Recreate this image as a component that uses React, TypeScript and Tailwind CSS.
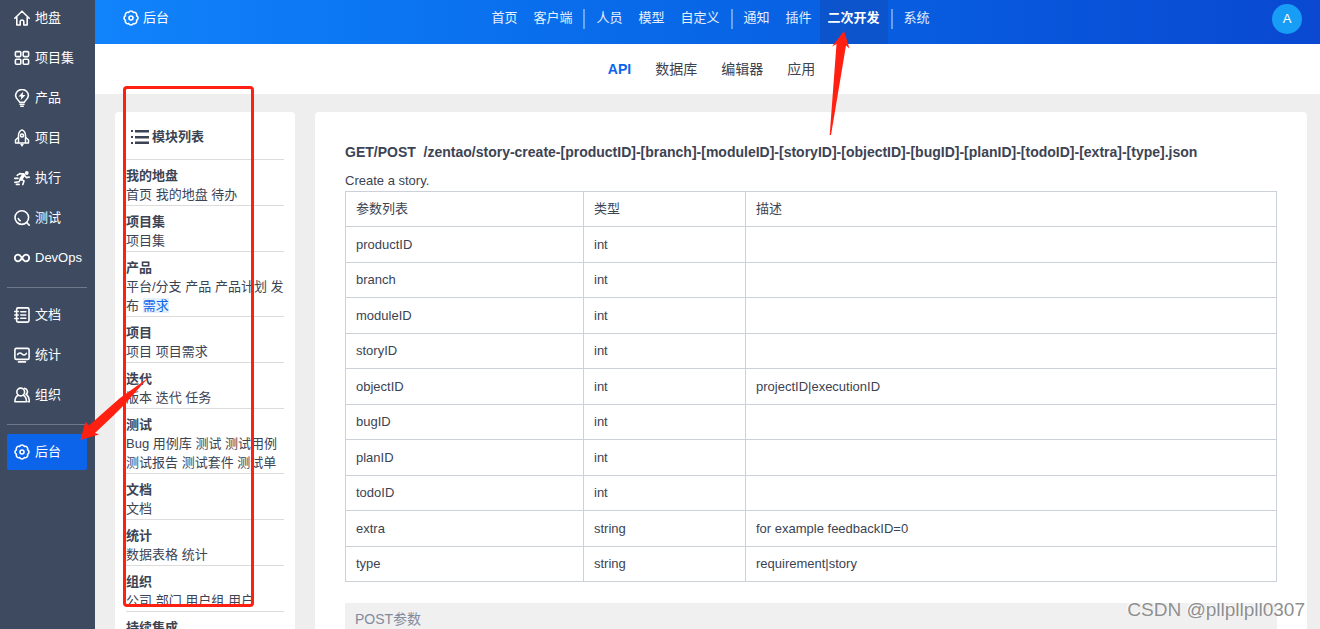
/**
 * Admin > secondary development > API page: module list on the left,
 * the selected endpoint with its parameters on the right.
 */
import { Fragment, type ReactNode } from 'react';

interface NavItem {
  label: string;
  icon: ReactNode;
  active?: boolean;
}

interface Module {
  title: string;
  entries: string[];
}

interface Param {
  name: string;
  type: string;
  desc?: string;
}

function Icon({ children }: { children: ReactNode }) {
  return (
    <svg
      viewBox="0 0 16 16"
      className="size-4 shrink-0"
      fill="none"
      stroke="currentColor"
      strokeWidth="1.6"
      strokeLinecap="round"
      strokeLinejoin="round"
      aria-hidden="true"
    >
      {children}
    </svg>
  );
}

const gear = (
  <Icon>
    <path d="M13.6 5.7A2.6 2.6 0 0 1 13.6 10.3A2.6 2.6 0 0 1 10.3 13.6A2.6 2.6 0 0 1 5.7 13.6A2.6 2.6 0 0 1 2.4 10.3A2.6 2.6 0 0 1 2.4 5.7A2.6 2.6 0 0 1 5.7 2.4A2.6 2.6 0 0 1 10.3 2.4A2.6 2.6 0 0 1 13.6 5.7Z" />
    <circle cx="8" cy="8" r="2" />
  </Icon>
);

const groups: NavItem[][] = [
  [
    { label: '地盘', icon: <Icon><path d="M.8 8.3 8 1.2l7.2 7.1M2.8 7v8h3.4v-3.2a1.8 1.8 0 0 1 3.6 0V15h3.4V7" /></Icon> },
    {
      label: '项目集',
      icon: (
        <Icon>
          <rect x="1.4" y="1.6" width="5.4" height="5" rx="1" />
          <rect x="9.2" y="1.6" width="5.4" height="5" rx="1" />
          <rect x="1.4" y="9.2" width="5.4" height="5" rx="1" />
          <rect x="9.2" y="9.2" width="5.4" height="5" rx="1" />
        </Icon>
      ),
    },
    {
      label: '产品',
      icon: (
        <svg viewBox="0 0 16 18" className="h-[18px] w-4 shrink-0" fill="none" stroke="currentColor" strokeWidth="1.6" aria-hidden="true">
          <path d="M5.6 13.2c0-1.6-4-3-4-6.6a6.4 6.1 0 0 1 12.8 0c0 3.6-4 5-4 6.6z" strokeLinejoin="round" />
          <path d="M5.4 15.2h5.2M6.2 17.2h3.6" />
          <path d="M9.2 2.8 4.5 7.6h2.8l-.6 3.5 4.8-5H8.7z" fill="currentColor" stroke="none" />
        </svg>
      ),
    },
    {
      label: '项目',
      icon: (
        <svg viewBox="0 0 16 18" className="h-[18px] w-4 shrink-0" fill="none" stroke="currentColor" strokeWidth="1.5" strokeLinejoin="round" aria-hidden="true">
          <path d="M4.5 14V6.5C4.5 3.6 6.4 1.6 8 .9c1.6.7 3.5 2.7 3.5 5.6V14z" />
          <path d="M4.5 8.3 1.5 11v3h3M11.5 8.3l3 2.7v3h-3" />
          <circle cx="8" cy="6.6" r="1.5" />
          <path d="M6 14.8h4L8 18z" fill="currentColor" stroke="none" />
        </svg>
      ),
    },
    {
      label: '执行',
      icon: (
        <Icon>
          <circle cx="12.8" cy="3" r="1.9" fill="currentColor" stroke="none" />
          <path d="M9.7 4.9 7 8.9" strokeWidth="3.4" />
          <path d="M9.5 4.1 5.8 3.6 3.2 5.3M10.8 5.7l1.6 1.9 2.8-.5M7.2 9.2l2.8 1.7-1.2 3.7M6.4 9.4l-1.5 2.4-4 .6M.8 8.4h3.2M2.4 14.4h2.8" />
        </Icon>
      ),
    },
    { label: '测试', icon: <Icon><circle cx="7.8" cy="7.6" r="6.8" /><path d="M12.7 12.6l2.5 2.5M4.3 8.5a3.8 3.8 0 0 0 1.8 2.3" /></Icon> },
    {
      label: 'DevOps',
      icon: (
        <Icon>
          <path
            d="M8 8C6.6 5.800 5.500 4.700 4.100 4.700a3.300 3.300 0 0 0 0 6.600C5.500 11.300 6.600 10.200 8 8s2.500-3.300 3.900-3.300a3.300 3.300 0 0 1 0 6.600C10.500 11.300 9.400 10.200 8 8z"
            strokeWidth="1.800"
          />
        </Icon>
      ),
    },
  ],
  [
    {
      label: '文档',
      icon: <Icon><rect x="2.6" y=".9" width="12.4" height="14.2" rx="1.5" /><path d="M6.8 4.7h5M6.8 8h5M6.8 11.3h5M.8 4.5h3.4M.8 8h3.4M.8 11.5h3.4" /></Icon>,
    },
    {
      label: '统计',
      icon: <Icon><rect x=".9" y="1.4" width="14.2" height="11" rx="1.5" /><path d="M3.6 7.5C5 5.5 6.6 5.5 8 7s3 1.5 4.4-.6M4.5 14.9h7" /></Icon>,
    },
    {
      label: '组织',
      icon: <Icon><circle cx="6.7" cy="5" r="3.9" /><path d="M4.3 8.3C2 9.3.9 11 .9 14.8h11.6c0-3.8-1.1-5.5-3.4-6.5M10.5 1.4c3 .3 4 4.2 1.6 6.1 2.3 1.3 3.2 3.5 3.2 7.3h-1.2" /></Icon>,
    },
  ],
  [{ label: '后台', icon: gear, active: true }],
];

const topNav: string[][] = [
  ['首页', '客户端'],
  ['人员', '模型', '自定义'],
  ['通知', '插件', '二次开发'],
  ['系统'],
];

const tabs = ['API', '数据库', '编辑器', '应用'];

const modules: Module[] = [
  { title: '我的地盘', entries: ['首页', '我的地盘', '待办'] },
  { title: '项目集', entries: ['项目集'] },
  { title: '产品', entries: ['平台/分支', '产品', '产品计划', '发布', '需求'] },
  { title: '项目', entries: ['项目', '项目需求'] },
  { title: '迭代', entries: ['版本', '迭代', '任务'] },
  { title: '测试', entries: ['Bug', '用例库', '测试', '测试用例', '测试报告', '测试套件', '测试单'] },
  { title: '文档', entries: ['文档'] },
  { title: '统计', entries: ['数据表格', '统计'] },
  { title: '组织', entries: ['公司', '部门', '用户组', '用户'] },
  { title: '持续集成', entries: [] },
];

const params: Param[] = [
  { name: 'productID', type: 'int' },
  { name: 'branch', type: 'int' },
  { name: 'moduleID', type: 'int' },
  { name: 'storyID', type: 'int' },
  { name: 'objectID', type: 'int', desc: 'projectID|executionID' },
  { name: 'bugID', type: 'int' },
  { name: 'planID', type: 'int' },
  { name: 'todoID', type: 'int' },
  { name: 'extra', type: 'string', desc: 'for example feedbackID=0' },
  { name: 'type', type: 'string', desc: 'requirement|story' },
];

function Sidebar() {
  return (
    <nav className="flex w-[95px] shrink-0 flex-col gap-1 bg-[#3d4a5f] pr-2 pl-[7px] text-white">
      {groups.map((items, i) => (
        <div key={i} className="flex flex-col gap-1">
          {i > 0 && <hr className="mt-[7px] mb-[5px] border-[#6f7989]" />}
          {items.map((item) => (
            <a
              key={item.label}
              href="#"
              className={`flex h-9 items-center gap-[5px] rounded-xs px-[7px] ${item.active ? 'bg-[#0c64eb]' : ''}`}
            >
              {item.icon}
              <span>{item.label}</span>
            </a>
          ))}
        </div>
      ))}
    </nav>
  );
}

function Header() {
  return (
    <header className="flex h-11 shrink-0 bg-linear-to-r from-[#1183fb] to-[#0a48d1] pr-[18px] pl-6 text-white">
      <div className="flex h-9 flex-1 items-center">
        <a href="#" className="ml-1 flex items-center gap-1">
          {gear}
          <span>后台</span>
        </a>
      </div>
      <nav className="flex">
        {topNav.map((items, i) => (
          <div key={i} className="flex">
            {i > 0 && <span className="mx-[3px] mt-[9px] h-5 w-0.5 bg-white/40" />}
            {items.map((label) => (
              <a
                key={label}
                href="#"
                className={`h-11 px-2 leading-9 whitespace-nowrap ${label === '二次开发' ? 'bg-[#0b54cb] font-bold' : 'text-white/90'}`}
              >
                {label}
              </a>
            ))}
          </div>
        ))}
      </nav>
      <div className="flex flex-1 justify-end pt-1">
        <button className="size-[30px] rounded-full bg-[#179df5] text-[13px]">A</button>
      </div>
    </header>
  );
}

function ModuleList() {
  return (
    <aside className="w-[180px] shrink-0 rounded-t bg-white px-[11px]">
      <h2 className="flex h-12 items-center gap-[3px] border-b border-[#dcdcdc] pt-[3px] pl-[5px] font-bold">
        <svg viewBox="0 0 18 14" className="h-3.5 w-[18px]" fill="currentColor" aria-hidden="true">
          <path d="M0 0h2v2H0zM0 6h2v2H0zM0 12h2v2H0zM4 0h14v2.5H4zM4 6h14v2.5H4zM4 11.5h14V14H4z" />
        </svg>
        模块列表
      </h2>
      {modules.map((m) => (
        <section key={m.title} className="border-b border-[#dcdcdc] pt-[7px] pb-px">
          <h3 className="leading-[18px] font-bold">{m.title}</h3>
          <p className="leading-[19px]">
            {m.entries.map((entry) => (
              <Fragment key={entry}>
                <a href="#" className={entry === '需求' ? 'bg-[#e6f0fd] text-[#0c64eb]' : ''}>{entry}</a>{' '}
              </Fragment>
            ))}
          </p>
        </section>
      ))}
    </aside>
  );
}

function ApiDetail() {
  return (
    <main className="min-w-0 flex-1 rounded-t bg-white px-[30px] pt-[30px]">
      <h1 className="text-sm leading-5 font-bold">
        GET/POST &nbsp;/zentao/story-create-[productID]-[branch]-[moduleID]-[storyID]-[objectID]-[bugID]-[planID]-[todoID]-[extra]-[type].json
      </h1>
      <p className="mt-[9px] leading-5">Create a story.</p>
      <table className="w-full table-fixed border-collapse text-left">
        <thead>
          <tr className="h-[35px]">
            <th className="w-[238px] border border-[#cbd0db] px-2.5 font-normal">参数列表</th>
            <th className="w-[162px] border border-[#cbd0db] px-2.5 font-normal">类型</th>
            <th className="border border-[#cbd0db] px-2.5 font-normal">描述</th>
          </tr>
        </thead>
        <tbody>
          {params.map((p) => (
            <tr key={p.name} className="odd:h-9 even:h-[35px]">
              <td className="border border-[#cbd0db] px-2.5">{p.name}</td>
              <td className="border border-[#cbd0db] px-2.5">{p.type}</td>
              <td className="border border-[#cbd0db] px-2.5">{p.desc}</td>
            </tr>
          ))}
        </tbody>
      </table>
      <h2 className="mt-[21px] h-10 bg-[#f0f0f0] px-2.5 text-sm leading-8 text-[#838a9d]">POST参数</h2>
    </main>
  );
}

/* Hand-drawn style marks laid over the page. */
function Annotations() {
  return (
    <div className="pointer-events-none absolute inset-0">
      <div className="absolute top-[86px] left-[123px] h-[521px] w-[131px] rounded border-3 border-[#ff2012]" />
      <svg className="absolute top-[376px] left-[78px]" width="72" height="66" viewBox="78 376 72 66" fill="#ff2012">
        <path d="M80.5 440 85.500 421.500l3.500 4L103 413 120 398 148 378 124 405 113 416 95 433l4 1.500z" />
      </svg>
      <svg className="absolute top-[30px] left-[826px]" width="26" height="106" viewBox="826 30 26 106" fill="#ff2012">
        <path d="M844 31 832 46.5l4.500-2.500L829.700 135h1.300L846 45.500l3.500 3z" />
      </svg>
      <p className="absolute right-[15px] bottom-[7px] text-[19px] leading-6 text-[#8f8f8f] [text-shadow:-1px_-1px_0_#fff]">
        CSDN @pllpllpll0307
      </p>
    </div>
  );
}

export default function App() {
  return (
    <div className="relative flex h-screen overflow-hidden bg-[#eeeeee] font-['Liberation_Sans','Noto_Sans_CJK_SC',sans-serif] text-[13px] text-[#3c4353]">
      <Sidebar />
      <div className="flex min-w-0 flex-1 flex-col">
        <Header />
        <nav className="flex h-[50px] shrink-0 items-center justify-center gap-6 bg-white pl-2 text-sm">
          {tabs.map((tab) => (
            <a key={tab} href="#" className={tab === 'API' ? 'font-bold text-[#0c64eb]' : ''}>
              {tab}
            </a>
          ))}
        </nav>
        <div className="flex min-h-0 flex-1 gap-5 overflow-hidden pt-[18px] pr-[13px] pl-5">
          <ModuleList />
          <ApiDetail />
        </div>
      </div>
      <Annotations />
    </div>
  );
}
